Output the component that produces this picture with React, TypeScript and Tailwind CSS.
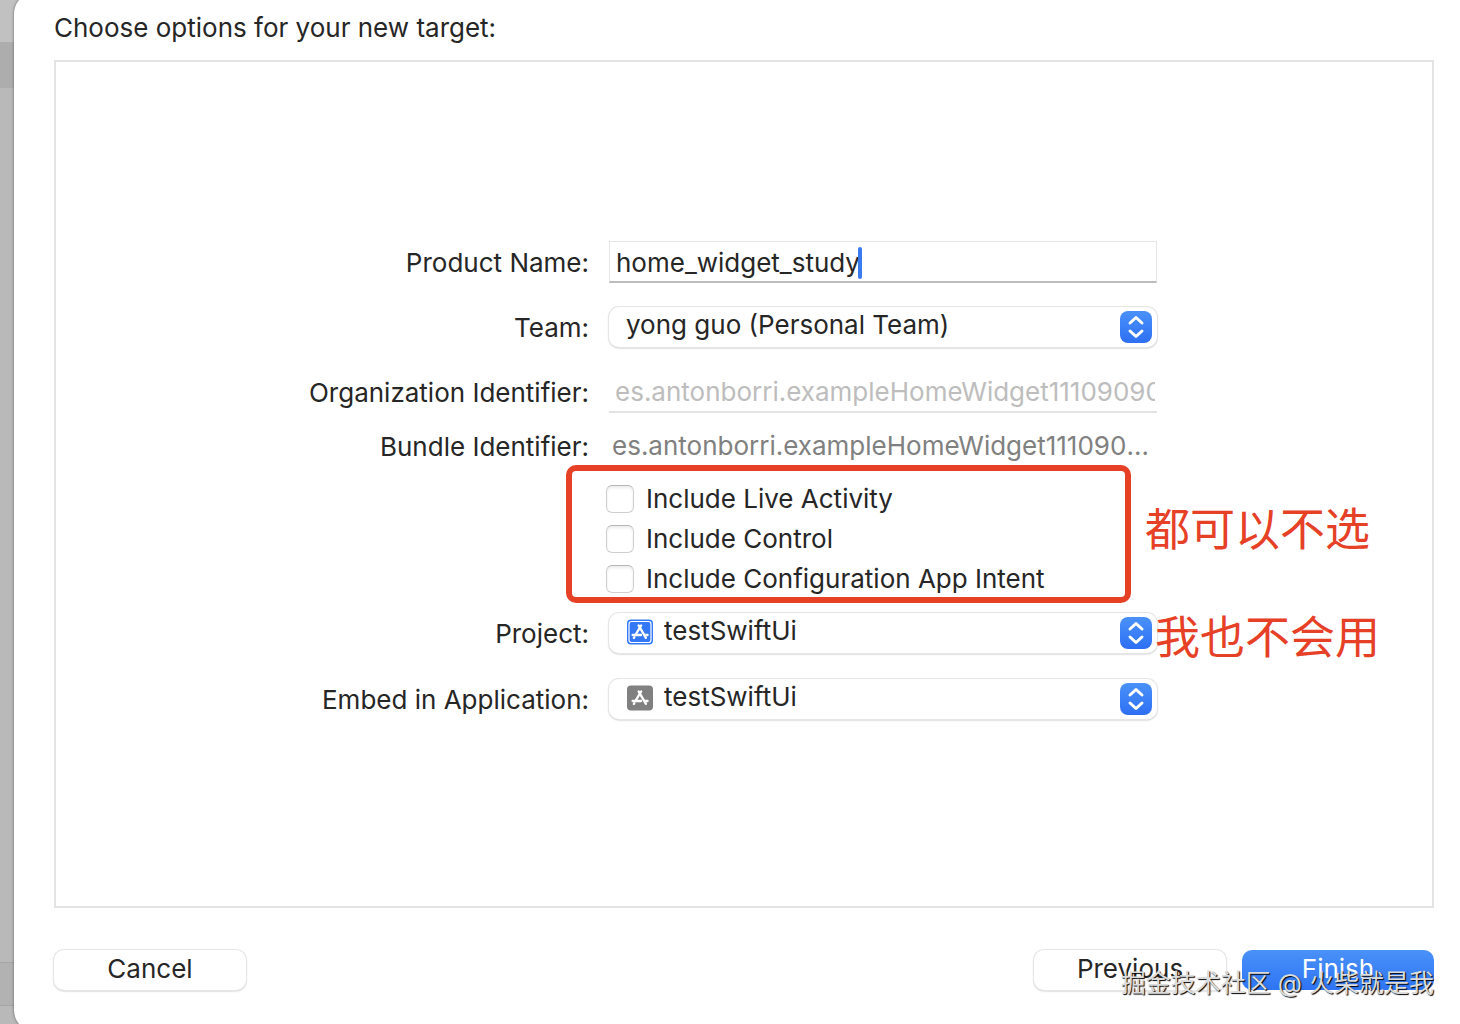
import { useState, type ReactNode } from "react";

type FieldProps = {
  id: string;
  label: string;
  className?: string;
  children: ReactNode;
};

function Field({ id, label, className = "", children }: FieldProps) {
  return (
    <div className={`grid grid-cols-[1fr_548px] items-center gap-5 ${className}`}>
      <label htmlFor={id} className="pt-0.5 text-right">
        {label}
      </label>
      {children}
    </div>
  );
}

function Stepper() {
  return (
    <span className="pointer-events-none absolute right-[5px] top-1 flex h-8 w-8 items-center justify-center rounded-lg bg-linear-to-b from-[#4a91f9] to-[#2e6ff3]">
      <svg
        className="h-8 w-8"
        viewBox="0 0 32 32"
        fill="none"
        stroke="white"
        strokeWidth={3}
        strokeLinecap="round"
        strokeLinejoin="round"
        aria-hidden="true"
      >
        <path d="M10 12 16 6.5 22 12M10 20 16 25.5 22 20" />
      </svg>
    </span>
  );
}

function AppIcon({ framed = false }: { framed?: boolean }) {
  return (
    <svg
      className="pointer-events-none absolute left-[18px] top-1.5 h-[26px] w-[26px]"
      viewBox="0 0 26 26"
      fill="none"
      aria-hidden="true"
    >
      <rect width="26" height="25" y="0.5" rx="4" fill={framed ? "#3478f6" : "#808080"} />
      {framed && (
        <rect x="2" y="2.5" width="22" height="21" rx="2.5" stroke="white" strokeWidth={1.2} />
      )}
      <g stroke="white" strokeWidth={2.3} strokeLinecap="round">
        <path d="M14.2 6.4 8.4 16" />
        <path d="M11.6 6.4 18.9 18.8" />
        <path d="M5.6 16H14" />
        <path d="M17.6 16h3" />
        <path d="m7.3 18.2-.4.7" />
      </g>
    </svg>
  );
}

type PopupProps = {
  id: string;
  option: string;
  icon?: ReactNode;
};

function Popup({ id, option, icon }: PopupProps) {
  return (
    <div className="relative">
      <select
        id={id}
        className={`block h-10 w-full appearance-none rounded-[10px] bg-white pb-1 pr-10 shadow-[0_0_0_1px_#e6e6e6,0_1px_2px_#a0a0a0] outline-none ${
          icon ? "pl-[55px]" : "pl-[17px]"
        }`}
      >
        <option>{option}</option>
      </select>
      {icon}
      <Stepper />
    </div>
  );
}

const extras = ["Include Live Activity", "Include Control", "Include Configuration App Intent"];

const pushButton =
  "h-10 w-48 rounded-[10px] bg-white pb-0.5 shadow-[0_0_0_1px_#e6e6e6,0_1px_2px_#a0a0a0]";

export default function App() {
  const [name, setName] = useState("home_widget_study");

  return (
    <div className="relative flex min-h-screen overflow-hidden bg-[#b9b9b9] font-['Inter','Noto_Sans_CJK_SC',sans-serif] text-[26px] leading-8 text-[#262626]">
      {/* Dimmed window behind the sheet */}
      <div className="absolute inset-y-0 left-0 flex w-10 flex-col" aria-hidden="true">
        <div className="h-[42px] bg-[#c1c1c1]" />
        <div className="h-[46px] bg-[#adadad]" />
        <div className="grow bg-[#b9b9b9]" />
        <div className="h-[44px] border-y border-[#a6a6a6] bg-[#b2b2b2]" />
        <div className="h-[18px] bg-[#b9b9b9]" />
      </div>

      <main className="relative -my-2 ml-3.5 flex grow flex-col rounded-l-[22px] bg-white pb-[42px] pl-10 pr-[26px] pt-5 shadow-[0_0_3px_#606060]">
        <h1>Choose options for your new target:</h1>

        <form
          id="target-options"
          className="mt-4 flex grow flex-col justify-center border-2 border-[#e3e3e3] pb-2 pr-[275px]"
          onSubmit={(e) => e.preventDefault()}
        >
          <Field id="product" label="Product Name:">
            <div className="relative">
              <input
                id="product"
                value={name}
                onChange={(e) => setName(e.target.value)}
                className="block h-[42px] w-full border border-b-2 border-[#e6e6e6] border-b-[#bdbdbd] px-1.5 pt-0.5 outline-none"
              />
              <span className="absolute left-[249px] top-1.5 h-8 w-1 rounded-full bg-[#3b7bf0]" />
            </div>
          </Field>

          <Field id="team" label="Team:" className="mt-6">
            <Popup id="team" option="yong guo (Personal Team)" />
          </Field>

          <Field id="organization" label="Organization Identifier:" className="mt-6">
            <input
              id="organization"
              disabled
              defaultValue="es.antonborri.exampleHomeWidget11109090"
              className="block h-[42px] w-full border-b-2 border-[#e3e3e3] pl-1.5 pr-0.5 text-[#bdbdbd]"
            />
          </Field>

          <Field id="bundle" label="Bundle Identifier:" className="mt-4">
            <output id="bundle" className="block truncate pl-[3px] text-[#808080]">
              es.antonborri.exampleHomeWidget11109090
            </output>
          </Field>

          <div className="relative mt-4 w-[548px] self-end">
            {extras.map((extra) => (
              <label key={extra} className="flex h-10 items-center gap-3">
                <input
                  type="checkbox"
                  className="-ml-[3px] h-7 w-7 appearance-none rounded-md border border-[#cfcfcf] border-t-[#b8b8b8] bg-white shadow-[inset_0_2px_3px_#ececec]"
                />
                {extra}
              </label>
            ))}
            {/* Marker drawn over the optional checkboxes */}
            <div className="pointer-events-none absolute -bottom-1 -left-[43px] -top-3.5 right-[26px] rounded-[10px] border-6 border-[#e64027]" />
            <p className="absolute left-full top-6 -ml-3 whitespace-nowrap text-[45px] leading-[54px] text-[#e64027]">
              都可以不选
            </p>
          </div>

          <Field id="project" label="Project:" className="mt-3.5">
            <div className="relative">
              <Popup id="project" option="testSwiftUi" icon={<AppIcon framed />} />
              <p className="absolute left-full top-[-2px] -ml-0.5 whitespace-nowrap text-[45px] leading-[54px] text-[#e64027]">
                我也不会用
              </p>
            </div>
          </Field>

          <Field id="embed" label="Embed in Application:" className="mt-[26px]">
            <Popup id="embed" option="testSwiftUi" icon={<AppIcon />} />
          </Field>
        </form>

        <footer className="relative mt-[42px] flex gap-4">
          <button type="button" className={pushButton}>
            Cancel
          </button>
          <button type="button" className={`ml-auto ${pushButton}`}>
            Previous
          </button>
          <button
            type="submit"
            form="target-options"
            className="h-10 w-48 rounded-[10px] bg-linear-to-b from-[#4a91f9] to-[#2e74f4] pb-0.5 text-white"
          >
            Finish
          </button>
          <p className="pointer-events-none absolute right-0 top-[17px] whitespace-nowrap text-[25px] text-[#dcdcdc] [text-shadow:1px_1px_1px_#000]">
            掘金技术社区 @ 火柴就是我
          </p>
        </footer>
      </main>
    </div>
  );
}
